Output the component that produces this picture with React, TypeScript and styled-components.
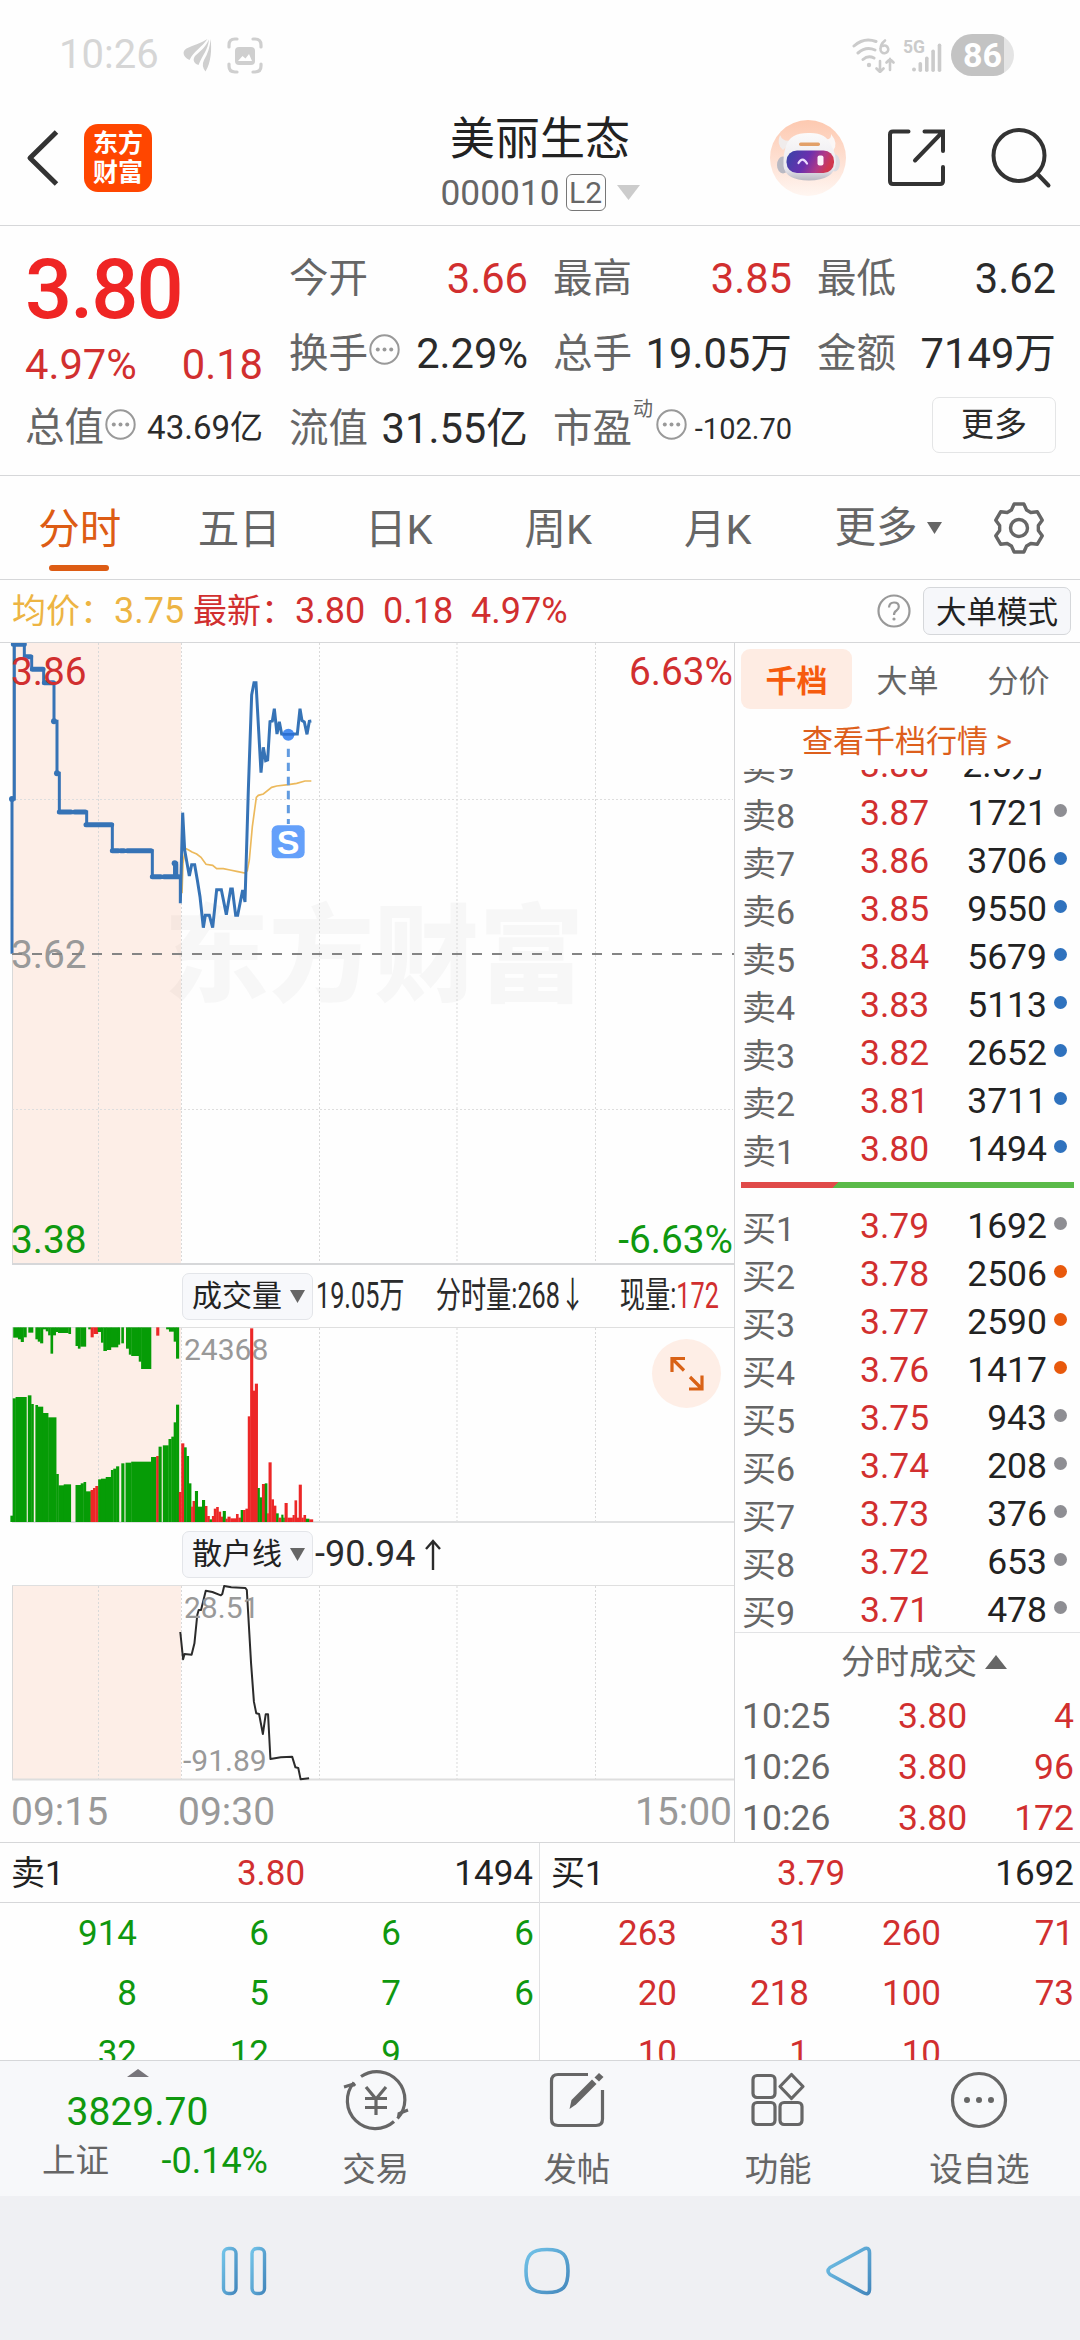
import React from "react";
import styled, { createGlobalStyle } from "styled-components";

const RED = "#d12f2f";
const GREEN = "#0f980f";
const GREY = "#666666";
const INK = "#2b2b2b";
const LINE = "#d6d7d9";

const Global = createGlobalStyle`
  * { box-sizing: border-box; }
  body {
    margin: 0;
    background: #fefefe;
    font-family: Roboto, "Noto Sans CJK SC", sans-serif;
    color: ${INK};
  }
`;

const Screen = styled.div`
  width: 1080px;
  height: 2340px;
  overflow: hidden;
  display: flex;
  flex-direction: column;
  background: #fefefe;
  white-space: nowrap;
`;

/* ---------- status bar ---------- */

const StatusBar = styled.div`
  height: 90px;
  padding: 20px 66px 0 59px;
  display: flex;
  align-items: center;
  justify-content: space-between;
  color: #d6d6d6;
`;

const StatusGroup = styled.div<{ $gap: number }>`
  display: flex;
  align-items: center;
  gap: ${(p) => p.$gap}px;
`;

const Clock = styled.span`
  font-size: 40px;
  line-height: 40px;
  width: 104px;
  margin-right: 5px;
`;

const Battery = styled.div`
  width: 63px;
  height: 42px;
  border-radius: 21px;
  background: linear-gradient(90deg, #c3c3c3 84%, #e4e4e4 84%);
  color: #fff;
  font-weight: 700;
  font-size: 34px;
  line-height: 43px;
  text-align: center;
`;

/* ---------- header ---------- */

const Header = styled.header`
  height: 136px;
  border-bottom: 1px solid ${LINE};
  display: grid;
  grid-template-columns: 310px 1fr 310px;
  align-items: center;
`;

const HeaderLeft = styled.div`
  display: flex;
  align-items: center;
  gap: 25px;
  padding-left: 26px;
`;

const Logo = styled.div`
  width: 68px;
  height: 68px;
  border-radius: 14px;
  background: #ff4600;
  color: #fff;
  font-weight: 700;
  font-size: 25px;
  line-height: 29px;
  display: flex;
  flex-direction: column;
  align-items: center;
  justify-content: center;
`;

const Titles = styled.div`
  display: flex;
  flex-direction: column;
  align-items: center;
  padding-top: 14px;
`;

const StockName = styled.div`
  font-size: 45px;
  line-height: 56px;
  color: #222;
`;

const CodeRow = styled.div`
  display: flex;
  align-items: center;
  gap: 6px;
  height: 50px;
  color: ${GREY};
  font-size: 35.3px;
  line-height: 40px;
`;

const LevelBadge = styled.span`
  width: 40px;
  height: 37px;
  border: 1.5px solid #777;
  border-radius: 6px;
  font-size: 30px;
  line-height: 35px;
  text-align: center;
  margin-right: 5px;
`;

const HeaderRight = styled.div`
  display: flex;
  align-items: center;
  justify-content: flex-end;
  padding-right: 28px;
`;

/* ---------- quote summary ---------- */

const Summary = styled.section`
  height: 250px;
  border-bottom: 1px solid ${LINE};
  padding: 0 24px 0 25px;
  display: grid;
  grid-template-columns: 238px 1fr;
  column-gap: 26px;
`;

const SummaryLeft = styled.div`
  padding-top: 21px;
  display: flex;
  flex-direction: column;
`;

const BigPrice = styled.div`
  height: 84px;
  line-height: 86px;
  font-size: 83px;
  font-weight: 500;
  letter-spacing: -2px;
  color: #ef2524;
`;

const ChangeRow = styled.div`
  height: 67px;
  line-height: 67px;
  font-size: 41.7px;
  color: ${RED};
  display: flex;
  justify-content: space-between;
`;

const MetricGrid = styled.div`
  padding-top: 15px;
  display: grid;
  grid-template-columns: 239px 239px 239px;
  grid-auto-rows: 75px;
  column-gap: 25px;
`;

const Metric = styled.div<{ $h?: number }>`
  height: ${(p) => p.$h ?? 75}px;
  display: flex;
  align-items: center;
  justify-content: space-between;
`;

const MetricLabel = styled.span`
  display: flex;
  align-items: center;
  font-size: 39.5px;
  line-height: 50px;
  color: ${GREY};
`;

const MetricValue = styled.span<{ $size?: number; $color?: string }>`
  font-size: ${(p) => p.$size ?? 41.7}px;
  line-height: 50px;
  color: ${(p) => p.$color ?? INK};
`;

const SupNote = styled.sup`
  font-size: 20px;
  line-height: 20px;
  align-self: flex-start;
  margin: -5px 2px 0 1px;
`;

const MoreButton = styled.button`
  width: 124px;
  height: 56px;
  padding: 0;
  margin-top: -7px;
  margin-left: auto;
  border: 1.5px solid #e4e5e6;
  border-radius: 7px;
  background: #fefefe;
  font: inherit;
  font-size: 33px;
  line-height: 52px;
  color: ${INK};
`;

/* ---------- period tabs ---------- */

const Tabs = styled.nav`
  height: 104px;
  border-bottom: 1px solid ${LINE};
  display: flex;
  align-items: center;
`;

const Tab = styled.div<{ $active?: boolean }>`
  position: relative;
  width: 159.5px;
  height: 103px;
  text-align: center;
  font-size: 41.5px;
  line-height: 107px;
  color: ${(p) => (p.$active ? "#dd5c14" : GREY)};
  &::after {
    content: "";
    display: ${(p) => (p.$active ? "block" : "none")};
    position: absolute;
    left: 49px;
    bottom: 8px;
    width: 60px;
    height: 6px;
    border-radius: 3px;
    background: #dd5c14;
  }
`;

const MoreTab = styled.div`
  display: flex;
  align-items: center;
  gap: 9px;
  width: 156px;
  height: 103px;
  padding-left: 37px;
  margin-right: 38px;
  font-size: 41.5px;
  line-height: 107px;
  color: ${GREY};
`;

/* ---------- legend bar ---------- */

const Legend = styled.div`
  height: 63px;
  border-bottom: 1px solid ${LINE};
  padding: 0 9px 0 12px;
  display: flex;
  align-items: center;
  font-size: 36px;
  line-height: 62px;
  color: ${RED};
`;

const LegendItem = styled.span<{ $w: number; $color?: string }>`
  width: ${(p) => p.$w}px;
  color: ${(p) => p.$color ?? RED};
`;

const LegendName = styled.span`
  font-size: 34px;
`;

const ModeButton = styled.div`
  width: 148px;
  height: 48px;
  margin-left: 12px;
  border: 1.5px solid #d5d7da;
  border-radius: 7px;
  background: #f6f7fa;
  color: #222;
  font-size: 30.5px;
  line-height: 49px;
  text-align: center;
`;

const Spacer = styled.div`
  flex: 1;
`;

/* ---------- main area ---------- */

const Main = styled.main`
  height: 1200px;
  border-bottom: 1px solid ${LINE};
  display: grid;
  grid-template-columns: 734px 1fr;
`;

const ChartColumn = styled.div`
  display: flex;
  flex-direction: column;
`;

const ChartBox = styled.div<{ $h: number }>`
  position: relative;
  height: ${(p) => p.$h}px;
  svg { display: block; }
`;

const AxisText = styled.span<{ $top: number; $left?: number; $right?: number; $color: string; $size?: number }>`
  position: absolute;
  top: ${(p) => p.$top}px;
  ${(p) => (p.$left !== undefined ? `left: ${p.$left}px;` : "")}
  ${(p) => (p.$right !== undefined ? `right: ${p.$right}px;` : "")}
  font-size: ${(p) => p.$size ?? 38.8}px;
  line-height: 40px;
  color: ${(p) => p.$color};
`;

const IndicatorRow = styled.div`
  height: 62px;
  padding-left: 182px;
  display: flex;
  align-items: center;
`;

const IndicatorPicker = styled.div`
  flex: none;
  width: 131px;
  height: 47px;
  border: 1px solid #e3e5e9;
  border-radius: 7px;
  background: #f7f8fb;
  padding-left: 9px;
  display: flex;
  align-items: center;
  gap: 8px;
  font-size: 30px;
  line-height: 46px;
  color: #222;
`;

const CondensedLine = styled.div`
  flex: none;
  margin-left: 3px;
  width: 590px;
  margin-right: -200px;
  display: flex;
  font-size: 36px;
  line-height: 44px;
  transform: scaleX(0.7);
  transform-origin: left center;
`;

const CondensedItem = styled.span<{ $w: number }>`
  flex: none;
  width: ${(p) => p.$w}px;
  em { font-style: normal; color: ${RED}; }
`;

const IndicatorValue = styled.span`
  display: flex;
  align-items: center;
  gap: 10px;
  margin-left: 2px;
  font-size: 36px;
`;

const ExpandButton = styled.div`
  position: absolute;
  left: 652px;
  top: 12px;
  width: 69px;
  height: 69px;
  border-radius: 50%;
  background: #feeee6;
`;

const TimeAxis = styled.div`
  flex: 1;
  padding: 0 2px 0 11px;
  display: flex;
  align-items: center;
  font-size: 39px;
  color: #999;
`;

const TimeMark = styled.span<{ $w?: number }>`
  ${(p) => (p.$w ? `width: ${p.$w}px;` : "margin-left: auto;")}
`;

/* ---------- order book ---------- */

const Book = styled.aside`
  border-left: 1px solid ${LINE};
  display: flex;
  flex-direction: column;
`;

const BookTabs = styled.div`
  display: flex;
  padding: 6px 0 0 6px;
`;

const BookTab = styled.div<{ $active?: boolean }>`
  width: 111px;
  height: 60px;
  border-radius: 9px;
  text-align: center;
  font-size: 31px;
  line-height: 65px;
  font-weight: ${(p) => (p.$active ? 700 : 400)};
  color: ${(p) => (p.$active ? "#f65b0d" : GREY)};
  background: ${(p) => (p.$active ? "#feece3" : "transparent")};
`;

const BookLink = styled.div`
  height: 60px;
  line-height: 66px;
  padding-left: 67px;
  font-size: 31px;
  color: #dd5f1c;
`;

const BookList = styled.div<{ $h: number; $end?: boolean }>`
  height: ${(p) => p.$h}px;
  overflow: hidden;
  display: flex;
  flex-direction: column;
  justify-content: ${(p) => (p.$end ? "flex-end" : "flex-start")};
`;

const BookRow = styled.div`
  flex: none;
  height: 48.04px;
  padding: 0 13px 0 7px;
  display: grid;
  grid-template-columns: 118px 80px 107px 1fr;
  align-items: center;
  font-size: 35.5px;
  line-height: 48px;
`;

const Side = styled.span`
  font-size: 34px;
  line-height: 42px;
  color: ${GREY};
  padding-top: 6px;
`;

const Price = styled.span`
  color: ${RED};
`;

const Volume = styled.span`
  text-align: right;
  color: #222;
`;

const Dot = styled.i<{ $color: string }>`
  width: 13px;
  height: 13px;
  margin: 0 0 5px auto;
  border-radius: 50%;
  background: ${(p) => p.$color};
`;

const RatioBar = styled.div`
  height: 6px;
  margin: 9px 6px 14px;
  background: linear-gradient(135deg, #e04a49 0 69px, #5aba49 69px);
`;

const TradesTitle = styled.div`
  height: 58px;
  border-top: 1px solid #e2e3e5;
  padding-left: 106px;
  display: flex;
  align-items: center;
  gap: 8px;
  font-size: 34px;
  line-height: 60px;
  color: ${GREY};
`;

const TradeRow = styled.div`
  height: 51px;
  padding: 0 6px 0 7px;
  display: grid;
  grid-template-columns: 156px 1fr 1fr;
  align-items: center;
  font-size: 35.5px;
  color: ${RED};
`;

const TradeTime = styled.span`
  color: ${GREY};
`;

const TradeVolume = styled.span`
  text-align: right;
`;

/* ---------- queue table ---------- */

const Queues = styled.section`
  height: 218px;
  border-bottom: 1px solid ${LINE};
  display: grid;
  grid-template-columns: 540px 540px;
`;

const Queue = styled.div<{ $divider?: boolean }>`
  overflow: hidden;
  border-right: ${(p) => (p.$divider ? "1px solid #e0e1e3" : "none")};
`;

const QueueHead = styled.div`
  height: 60px;
  border-bottom: 1px solid ${LINE};
  padding: 0 6px 0 11px;
  display: grid;
  grid-template-columns: 220px 80px 1fr;
  font-size: 35px;
  line-height: 61px;
  color: #222;
  span:nth-child(1) { font-size: 34px; }
  span:nth-child(2) { color: ${RED}; text-align: center; }
  span:nth-child(3) { text-align: right; }
`;

const QueueGrid = styled.div<{ $color: string }>`
  display: grid;
  grid-template-columns: 137px 132px 132px 133px;
  grid-auto-rows: 60px;
  text-align: right;
  font-size: 35px;
  line-height: 61px;
  color: ${(p) => p.$color};
`;

/* ---------- bottom toolbar ---------- */

const Toolbar = styled.footer`
  height: 135px;
  background: #f7f8fa;
  display: grid;
  grid-template-columns: 275px repeat(4, 201.25px);
`;

const IndexBox = styled.div`
  display: flex;
  flex-direction: column;
  align-items: center;
  padding-top: 8px;
  color: ${GREEN};
  svg { display: block; }
`;

const IndexValue = styled.div`
  margin-top: 12px;
  font-size: 39px;
  line-height: 46px;
`;

const IndexRow = styled.div`
  width: 100%;
  padding: 0 7px 0 42px;
  display: flex;
  justify-content: space-between;
  font-size: 36px;
  line-height: 44px;
  margin-top: 4px;
`;

const IndexName = styled.span`
  font-size: 33.5px;
  color: ${GREY};
`;

const Action = styled.div`
  display: flex;
  flex-direction: column;
  align-items: center;
  padding-top: 6px;
  font-size: 33.5px;
  color: ${GREY};
  svg { display: block; }
`;

const ActionLabel = styled.span`
  margin-top: 15px;
  line-height: 44px;
`;

const NavBar = styled.div`
  height: 144px;
  background: #eff0f3;
  display: flex;
  align-items: center;
  justify-content: space-between;
  padding: 6px 205px 0 219px;
`;

/* ---------- icons ---------- */

const Triangle = ({ w, h, color, up }: { w: number; h: number; color: string; up?: boolean }) => (
  <svg width={w} height={h} viewBox="0 0 10 10" preserveAspectRatio="none">
    <path d={up ? "M0 10L5 0L10 10Z" : "M0 0H10L5 10Z"} fill={color} />
  </svg>
);

const InfoSvg = styled.svg`
  margin-top: -8px;
`;

const InfoIcon = () => (
  <InfoSvg width="33" height="33" viewBox="0 0 33 33">
    <circle cx="16.5" cy="16.5" r="14.2" fill="none" stroke="#999" strokeWidth="2" />
    <circle cx="9.8" cy="16.5" r="2" fill="#999" />
    <circle cx="16.5" cy="16.5" r="2" fill="#999" />
    <circle cx="23.2" cy="16.5" r="2" fill="#999" />
  </InfoSvg>
);

const Plane = () => (
  <svg width="29" height="34" viewBox="0 0 29 34" fill="#cfcfcf">
    <path d="M27.500 1C29 11 28 25 22.500 33.500C19.500 30 19 26 21 22C25 15 27 9 27.500 1Z" />
    <path d="M26 1.500C25 12 19.500 17 15.500 27C10 25 9.500 21 12.500 17.500C19 12 23 8 26 1.500Z" />
    <path d="M24.500 1C19 9 11 13 6.500 22C-0.500 19 -1 13 3.500 10.500C11 7 18 5 24.500 1Z" />
  </svg>
);

const ShotIcon = () => (
  <svg width="36" height="37" viewBox="0 0 36 37" fill="none" stroke="#cfcfcf" strokeWidth="3.2" strokeLinecap="round">
    <path d="M2 10V8Q2 2 8 2H10M26 2H28Q34 2 34 8V10M34 27V29Q34 35 28 35H26M10 35H8Q2 35 2 29V27" />
    <rect x="8" y="10" width="20" height="18" rx="4" fill="#cfcfcf" stroke="none" />
    <path d="M11 24L15.500 19L18.500 21.500L22 17L25 24Z" fill="#fff" stroke="none" />
  </svg>
);

const WifiIcon = () => (
  <svg width="43" height="36" viewBox="0 0 43 36" fill="none" stroke="#cbcbcb" strokeWidth="3" strokeLinecap="round">
    <path d="M2 9Q12 0 24 4.500M6 16Q14 9 23 13M11 22.500Q16 18 22 21" />
    <circle cx="17" cy="28" r="2.200" fill="#cbcbcb" stroke="none" />
    <path d="M33 3.500Q28.500 7 28.500 12A3.900 3.900 0 1 0 30.500 9" strokeWidth="2.600" />
    <path d="M28 24V35M24.500 31.500L28 35L31.500 31.500M38 33V22M34.500 25.500L38 22L41.500 25.500" strokeWidth="2.600" />
  </svg>
);

const SignalIcon = () => (
  <svg width="40" height="36" viewBox="0 0 40 36" fill="#cbcbcb">
    <text x="0" y="15.500" fontSize="18" fontWeight="700" fontFamily="Roboto, sans-serif" textLength="22" lengthAdjust="spacingAndGlyphs">5G</text>
    <circle cx="11" cy="32.500" r="2" />
    <rect x="15.500" y="25" width="3.600" height="10" rx="1.800" />
    <rect x="22" y="19.500" width="3.600" height="15.500" rx="1.800" />
    <rect x="28.300" y="12.500" width="3.600" height="22.500" rx="1.800" />
    <rect x="34.700" y="6.500" width="3.600" height="28.500" rx="1.800" />
  </svg>
);

const BackIcon = () => (
  <svg width="33" height="56" viewBox="0 0 33 56" fill="none" stroke="#333" strokeWidth="5">
    <path d="M30.500 2L4 28L30.500 54" strokeLinejoin="round" />
  </svg>
);

const RobotSvg = styled.svg`
  margin-right: 40px;
`;

const Robot = () => (
  <RobotSvg width="76" height="76" viewBox="0 0 76 76">
    <defs>
      <linearGradient id="halo" x1="0" y1="0" x2="0" y2="1">
        <stop offset="0" stopColor="#fdc9b0" />
        <stop offset="0.550" stopColor="#fee1d4" />
        <stop offset="1" stopColor="#fff6f1" />
      </linearGradient>
      <linearGradient id="visor" x1="0" y1="0" x2="1" y2="0.250">
        <stop offset="0" stopColor="#3546a8" />
        <stop offset="0.500" stopColor="#6b2fae" />
        <stop offset="0.800" stopColor="#b23a86" />
        <stop offset="1" stopColor="#d0384f" />
      </linearGradient>
      <linearGradient id="shell" x1="0" y1="0" x2="0" y2="1">
        <stop offset="0" stopColor="#fbfafa" />
        <stop offset="0.750" stopColor="#e9e8ee" />
        <stop offset="1" stopColor="#b9b8c2" />
      </linearGradient>
    </defs>
    <circle cx="38" cy="38" r="38" fill="url(#halo)" />
    <ellipse cx="13" cy="45" rx="6" ry="8.500" fill="#b9b9c3" />
    <ellipse cx="65" cy="43" rx="5" ry="8.500" fill="#dcdce2" />
    <path d="M10 15Q6 24 13 30L23 20Q13 23 10 15Z" fill="#f0ecec" />
    <path d="M61 14Q69 24 63 31L53 19Q62 21 61 14Z" fill="#fbf7f6" />
    <path d="M16 26Q20 13 38 13Q56 12 61 25Q66 33 66 44Q64 60 39 60.500Q15 60 13.500 46Q13 34 16 26Z" fill="url(#shell)" />
    <rect x="29" y="22.500" width="21" height="3.500" rx="1.700" fill="#e2a069" />
    <rect x="16.500" y="30.500" width="47.500" height="22.500" rx="10.500" fill="url(#visor)" />
    <path d="M28.500 43Q32.500 36 37 43.500" fill="none" stroke="#ecdcff" strokeWidth="2.200" strokeLinecap="round" />
    <rect x="47.500" y="35.500" width="6" height="10" rx="2" fill="#fdf4fb" />
  </RobotSvg>
);

const ShareSvg = styled.svg`
  margin-right: 44px;
`;

const ShareIcon = () => (
  <ShareSvg width="60" height="60" viewBox="0 0 60 60" fill="none" stroke="#333" strokeWidth="4" strokeLinecap="round">
    <path d="M22.500 3.500H7Q4 3.500 4 6.500V53Q4 56 7 56H54Q57 56 57 53V39" />
    <path d="M38.500 3.500H57V23M57 3.500L29 32.500" />
  </ShareSvg>
);

const SearchIcon = () => (
  <svg width="62" height="62" viewBox="0 0 62 62" fill="none" stroke="#333" strokeWidth="4" strokeLinecap="round">
    <circle cx="29" cy="28.500" r="25.500" />
    <path d="M47.500 47L58.500 58.500" />
  </svg>
);

const gearPath = (() => {
  const pts: string[] = [];
  const n = 6;
  for (let i = 0; i < n; i++) {
    const a = (i * 2 * Math.PI) / n - Math.PI / 2;
    const at = (r: number, d: number) =>
      `${(27 + r * Math.cos(a + d)).toFixed(2)} ${(27 + r * Math.sin(a + d)).toFixed(2)}`;
    pts.push(at(19.5, -0.4), at(24.5, -0.2), at(24.5, 0.2), at(19.5, 0.4));
  }
  return "M" + pts.join("L") + "Z";
})();

const GearIcon = () => (
  <svg width="54" height="54" viewBox="0 0 54 54" fill="none" stroke={GREY} strokeWidth="3.400" strokeLinejoin="round">
    <path d={gearPath} />
    <circle cx="27" cy="27" r="8.500" />
  </svg>
);

const HelpIcon = () => (
  <svg width="34" height="34" viewBox="0 0 34 34" fill="none" stroke="#999" strokeWidth="2.200">
    <circle cx="17" cy="17" r="15.500" />
    <path d="M12 13.500Q12.300 8.500 17 8.500Q21.800 8.500 21.800 12.700Q21.800 15 19.500 16.500Q17 18 17 21" />
    <circle cx="17" cy="25" r="1.600" fill="#999" stroke="none" />
  </svg>
);

const ExpandIcon = () => (
  <svg width="69" height="69" viewBox="0 0 69 69" fill="none" stroke="#d96216" strokeWidth="3.200">
    <path d="M20 33V19.500H33M20 19.500L32 31.500M50 36.500V50H37M50 50L38 38" />
  </svg>
);

const TradeIcon = () => (
  <svg width="66" height="66" viewBox="0 0 66 66" fill="none" stroke={GREY} strokeWidth="3.200">
    <path d="M18 9.500A28 28 0 0 1 54.500 51.500" />
    <path d="M51 54.500A28 28 0 0 1 11 15.500" />
    <path d="M1 20L10.500 17L12 19M65 43L56 46.500L55.500 50" strokeWidth="3" />
    <path d="M23 20L33 32L43 20M33 32V48M22 31.500H44M22 40.500H44" />
  </svg>
);

const PostIcon = () => (
  <svg width="60" height="66" viewBox="0 0 60 66" fill="none" stroke={GREY} strokeWidth="3.200">
    <path d="M41 7.500H11Q4.500 7.500 4.500 14V52Q4.500 58.500 11 58.500H49Q55.500 58.500 55.500 52V23" />
    <path d="M22.500 42L24.500 33L45 12.500L49.500 17L29 37.500Z" fill={GREY} stroke="none" />
    <path d="M47.500 10.500L52 6L56.500 10L52 14.500Z" fill={GREY} stroke="none" />
  </svg>
);

const AppsIcon = () => (
  <svg width="60" height="66" viewBox="0 0 60 66" fill="none" stroke={GREY} strokeWidth="3.200">
    <rect x="5" y="8.500" width="22" height="22" rx="4" />
    <rect x="5" y="35.500" width="22" height="22" rx="4" />
    <rect x="32" y="35.500" width="22" height="22" rx="4" />
    <path d="M43.500 7.500L55 19.500L43.500 31.500L32 19.500Z" strokeLinejoin="round" />
  </svg>
);

const DotsIcon = () => (
  <svg width="60" height="66" viewBox="0 0 60 66" fill="none" stroke={GREY} strokeWidth="3.200">
    <circle cx="30" cy="33" r="26.500" />
    <g fill={GREY} stroke="none">
      <circle cx="18" cy="33" r="3" />
      <circle cx="30" cy="33" r="3" />
      <circle cx="42" cy="33" r="3" />
    </g>
  </svg>
);

const NavGradient = ({ id }: { id: string }) => (
  <linearGradient id={id} x1="0" y1="0" x2="1" y2="1">
    <stop offset="0" stopColor="#72c3e8" />
    <stop offset="1" stopColor="#4488bd" />
  </linearGradient>
);

const RecentsIcon = () => (
  <svg width="50" height="52" viewBox="0 0 50 52" fill="none" stroke="url(#navA)" strokeWidth="3.400">
    <defs>
      <NavGradient id="navA" />
    </defs>
    <rect x="4.500" y="3.500" width="12.500" height="45" rx="5" />
    <rect x="33" y="3.500" width="12.500" height="45" rx="5" />
  </svg>
);

const HomeIcon = () => (
  <svg width="50" height="52" viewBox="0 0 50 52" fill="none" stroke="url(#navB)" strokeWidth="3.600">
    <defs>
      <NavGradient id="navB" />
    </defs>
    <path d="M25 4.500C41 4.500 46 10 46 26C46 42 41 47.500 25 47.500C9 47.500 4 42 4 26C4 10 9 4.500 25 4.500Z" />
  </svg>
);

const BackNavIcon = () => (
  <svg width="50" height="52" viewBox="0 0 50 52" fill="none" stroke="url(#navC)" strokeWidth="3.600" strokeLinejoin="round">
    <defs>
      <NavGradient id="navC" />
    </defs>
    <path d="M38 4.500Q44.500 1 44.500 8V44Q44.500 51 38 47.500L5 29.500Q1 26 5 22.500Z" />
  </svg>
);

/* ---------- charts ---------- */

const GRID_X = [98.5, 181.5, 319.5, 457, 595.5];

const GridLines = ({ y1, y2 }: { y1: number; y2: number }) => (
  <g stroke="#d9d9d9" strokeWidth="1" strokeDasharray="2 2">
    {GRID_X.map((x) => (
      <path key={x} d={`M${x} ${y1}V${y2}`} />
    ))}
  </g>
);

const OverlaySvg = styled.svg<{ $top: number }>`
  position: absolute;
  left: 0;
  top: ${(p) => p.$top}px;
`;

const pricePath =
  "M36 971V507H43V43H73V80H95V118H131V158H162V274H171V430H178V546H260V584H337V662H457V740H524V700H530V740H541V820L548 548L554 660L568 738L575 704H584L592 750L600 800L610 893L616 856H628L638 893L650 779H664L679 854L692 777H697L707 856H713L728 780L735 816L745 480L755 195L762 158H768L783 428L790 352L797 392L803 390L810 275L817 273L823 236L831 312L838 275L845 312H892L900 236L906 272L913 276L921 313L928 274L934 273";
const averagePath =
  "M546 790L549 700L556 655L566 660L576 666L590 672L603 682L618 703L638 706L650 716L670 716L690 720L710 724L735 729L742 722L748 690L757 590L769 502L775 496L790 492L815 472L830 468L865 464L890 460L915 453L934 453";
const stepsPath =
  "M40 43H73M76 80H92M97 118H129M133 158H160M178 546H213M224 546H256M258 584H335M337 662H355M362 662H372M382 662H453M457 740H482M492 740H537M527 703V738";

const PriceChart = () => (
  <ChartBox $h={622}>
    <svg width="734" height="622" viewBox="0 643 734 622">
      <rect x="12" y="643" width="169" height="621" fill="#fdeee7" />
      <text
        x="164"
        y="993"
        fontSize="106"
        fontWeight="900"
        fontFamily="Noto Sans CJK SC, sans-serif"
        fill="#000"
        fillOpacity="0.028"
        textLength="420"
        lengthAdjust="spacingAndGlyphs"
      >
        东方财富
      </text>
      <path d="M12.500 643V1264" stroke="#d9d9d9" />
      <GridLines y1={643} y2={1264} />
      <path d="M12 799.500H733M12 1109.500H733" stroke="#dedede" strokeDasharray="2 2" />
      <path d="M12 1264H734" stroke={LINE} strokeWidth="2" />
      <g transform="translate(0 630) scale(0.33333)" fill="none">
        <path d={averagePath} stroke="#ecb95c" strokeWidth="5" />
        <path d={pricePath} stroke="#3673b6" strokeWidth="9" />
        <path d={stepsPath} stroke="#3673b6" strokeWidth="15" strokeLinecap="round" />
        <g fill="#3673b6">
          <circle cx="36" cy="507" r="9" />
          <circle cx="162" cy="274" r="9" />
          <circle cx="171" cy="430" r="9" />
          <circle cx="524" cy="700" r="9" />
        </g>
        <path d="M865 356V582" stroke="#619be0" strokeWidth="9" strokeDasharray="25 17.200" />
        <circle cx="865" cy="314" r="18" fill="#4a8ef0" />
        <path d="M847 313H883" stroke="#2c6fd0" strokeWidth="8" />
        <rect x="815" y="586" width="99" height="99" rx="18" fill="#64a0fa" />
        <text x="864.500" y="672" fontSize="102" fontWeight="700" fontFamily="Liberation Sans, sans-serif" fill="#fff" textAnchor="middle">
          S
        </text>
      </g>
    </svg>
    <AxisText $top={9} $left={11} $color={RED}>3.86</AxisText>
    <AxisText $top={9} $right={1} $color={RED}>6.63%</AxisText>
    <AxisText $top={292} $left={11} $color="#999">3.62</AxisText>
    <AxisText $top={577} $left={11} $color={GREEN}>3.38</AxisText>
    <AxisText $top={577} $right={1} $color={GREEN}>-6.63%</AxisText>
    <OverlaySvg $top={309} width="734" height="4" viewBox="0 0 734 4">
      <path d="M12 2H734" stroke="#858585" strokeWidth="2" strokeDasharray="10 10" />
    </OverlaySvg>
  </ChartBox>
);

type Bar = [number, number, number, string];

/* x range, depth reached from the top edge, colour */
const upperBars: Bar[] = [
  [28, 38, 263, "g"], [38, 44, 268, "g"], [44, 50, 276, "g"], [50, 56, 262, "g"], [60, 70, 248, "g"],
  [75, 80, 268, "g"], [80, 85, 275, "g"], [85, 91, 280, "g"], [91, 97, 238, "g"], [97, 102, 244, "g"],
  [102, 107, 256, "g"], [107, 112, 311, "g"], [112, 118, 256, "g"], [118, 123, 246, "g"], [123, 145, 249, "g"],
  [145, 150, 252, "g"], [160, 165, 288, "g"], [165, 170, 296, "g"], [170, 182, 290, "g"], [187, 192, 238, "g"],
  [192, 198, 262, "r"], [198, 207, 252, "r"], [207, 214, 246, "g"], [214, 219, 278, "g"], [219, 226, 303, "g"],
  [226, 235, 300, "g"], [235, 250, 292, "g"], [250, 254, 284, "g"], [257, 262, 280, "g"], [267, 273, 296, "g"],
  [273, 278, 314, "g"], [278, 294, 318, "g"], [294, 299, 335, "g"], [299, 320, 357, "g"], [331, 337, 257, "r"],
  [352, 358, 238, "g"], [358, 368, 245, "g"], [368, 373, 275, "g"], [373, 379, 326, "g"],
];

/* x range, top of the bar, colour */
const lowerBars: Bar[] = [
  [22, 27, 797, "g"], [27, 33, 445, "g"], [33, 56, 441, "g"], [59, 66, 436, "g"], [66, 71, 462, "g"],
  [75, 80, 465, "g"], [80, 91, 470, "g"], [91, 102, 489, "g"], [102, 119, 502, "g"], [119, 124, 672, "g"],
  [124, 135, 706, "g"], [135, 150, 703, "g"], [160, 171, 705, "g"], [171, 177, 700, "g"], [177, 182, 696, "g"],
  [182, 192, 724, "g"], [192, 197, 720, "r"], [197, 202, 714, "r"], [202, 208, 708, "r"], [208, 214, 688, "g"],
  [214, 224, 686, "g"], [224, 235, 681, "g"], [235, 240, 660, "g"], [240, 246, 656, "g"], [246, 252, 649, "g"],
  [257, 263, 640, "g"], [266, 278, 638, "g"], [278, 320, 635, "g"], [320, 331, 621, "g"], [331, 336, 618, "r"],
  [336, 342, 590, "g"], [345, 357, 586, "g"], [357, 363, 567, "g"], [363, 368, 560, "g"], [368, 373, 517, "g"],
  [373, 379, 464, "g"], [379, 384, 726, "r"], [384, 390, 580, "r"], [390, 395, 592, "g"], [395, 400, 618, "g"],
  [400, 405, 700, "g"], [405, 408, 770, "r"], [408, 413, 753, "r"], [413, 419, 723, "g"], [419, 428, 770, "g"],
  [428, 434, 750, "g"], [434, 439, 768, "r"], [439, 444, 798, "r"], [444, 449, 808, "g"], [449, 453, 798, "r"],
  [453, 458, 776, "r"], [458, 463, 771, "r"], [463, 468, 785, "r"], [468, 472, 800, "r"], [472, 478, 783, "g"],
  [478, 482, 806, "r"], [482, 488, 800, "r"], [488, 500, 805, "r"], [500, 505, 792, "r"], [505, 510, 803, "r"],
  [510, 515, 780, "g"], [515, 520, 780, "r"], [520, 525, 776, "r"], [525, 530, 499, "r"], [530, 536, 235, "r"],
  [536, 540, 422, "r"], [540, 546, 401, "r"], [546, 550, 714, "g"], [550, 555, 742, "g"], [555, 561, 702, "r"],
  [561, 566, 700, "g"], [566, 569, 790, "r"], [569, 575, 637, "r"], [575, 580, 748, "r"], [580, 585, 767, "r"],
  [585, 590, 790, "g"], [590, 596, 803, "r"], [596, 600, 794, "g"], [600, 603, 803, "g"], [603, 609, 759, "r"],
  [609, 620, 803, "r"], [620, 624, 795, "r"], [624, 629, 751, "r"], [629, 633, 803, "r"], [633, 639, 704, "r"],
  [639, 643, 803, "r"], [643, 648, 795, "r"], [648, 655, 806, "g"], [655, 663, 808, "r"],
];

const barColor = (c: string) => (c === "g" ? "#069c06" : "#ec2727");

const VolumeChart = () => (
  <ChartBox $h={196}>
    <svg width="734" height="196" viewBox="0 1327 734 196">
      <rect x="12" y="1327" width="169" height="194" fill="#fdeee7" />
      <path d="M12.500 1327V1521" stroke="#d9d9d9" />
      <GridLines y1={1328} y2={1521} />
      <path d="M12 1327.500H734" stroke="#dfdfdf" />
      <path d="M12 1522H734" stroke={LINE} strokeWidth="1.500" />
    </svg>
    <AxisText $top={3} $left={184} $color="#999" $size={30}>24368</AxisText>
    <OverlaySvg $top={0} width="734" height="196" viewBox="0 1327 734 196">
      <g transform="translate(0 1250) scale(0.47194 0.33333)" shapeRendering="geometricPrecision">
        {upperBars.map(([a, b, y, c]) => (
          <rect key={a} x={a} y={232} width={b - a + 0.6} height={y - 232} fill={barColor(c)} />
        ))}
        {lowerBars.map(([a, b, y, c]) => (
          <rect key={a} x={a} y={y} width={b - a + 0.6} height={816 - y} fill={barColor(c)} />
        ))}
      </g>
    </OverlaySvg>
    <ExpandButton>
      <ExpandIcon />
    </ExpandButton>
  </ChartBox>
);

const retailPath =
  "M382 306L388 388L391 372L406 374L412 340L418 255L421 240H426L436 182L450 186L468 196L471 192L475 168L490 172L520 174L523 180L532 400L538 515L543 550L549 552L557 612L563 553H568L573 687L595 682L619 680L626 712L632 714L637 748L655 745";

const RetailChart = () => (
  <ChartBox $h={196}>
    <svg width="734" height="196" viewBox="0 1585 734 196">
      <rect x="12" y="1585" width="169" height="194" fill="#fdeee7" />
      <path d="M12.500 1585V1780" stroke="#d9d9d9" />
      <GridLines y1={1586} y2={1779} />
      <path d="M12 1585.500H734" stroke="#dfdfdf" />
      <path d="M12 1779.500H734" stroke="#dedede" strokeWidth="2" />
      <g transform="translate(0 1530) scale(0.47194 0.33333)">
        <path d={retailPath} fill="none" stroke="#2b2b2b" strokeWidth="2" vectorEffect="non-scaling-stroke" strokeLinejoin="round" />
      </g>
    </svg>
    <AxisText $top={3} $left={184} $color="#999" $size={30}>28.51</AxisText>
    <AxisText $top={156} $left={183} $color="#999" $size={30}>-91.89</AxisText>
  </ChartBox>
);

/* ---------- data ---------- */

const G = "#8e8e93";
const B = "#2f72be";
const O = "#e8590c";

const sells: [string, string, string, string][] = [
  ["卖9", "3.88", "2.6万", ""],
  ["卖8", "3.87", "1721", G],
  ["卖7", "3.86", "3706", B],
  ["卖6", "3.85", "9550", B],
  ["卖5", "3.84", "5679", B],
  ["卖4", "3.83", "5113", B],
  ["卖3", "3.82", "2652", B],
  ["卖2", "3.81", "3711", B],
  ["卖1", "3.80", "1494", B],
];

const buys: [string, string, string, string][] = [
  ["买1", "3.79", "1692", G],
  ["买2", "3.78", "2506", O],
  ["买3", "3.77", "2590", O],
  ["买4", "3.76", "1417", O],
  ["买5", "3.75", "943", G],
  ["买6", "3.74", "208", G],
  ["买7", "3.73", "376", G],
  ["买8", "3.72", "653", G],
  ["买9", "3.71", "478", G],
];

const trades = [
  ["10:25", "3.80", "4"],
  ["10:26", "3.80", "96"],
  ["10:26", "3.80", "172"],
];

const sellQueue = ["914", "6", "6", "6", "8", "5", "7", "6", "32", "12", "9", ""];
const buyQueue = ["263", "31", "260", "71", "20", "218", "100", "73", "10", "1", "10", ""];

const Level = ({ row }: { row: [string, string, string, string] }) => (
  <BookRow>
    <Side>{row[0]}</Side>
    <Price>{row[1]}</Price>
    <Volume>{row[2]}</Volume>
    <Dot $color={row[3] || "transparent"} />
  </BookRow>
);

export default function App() {
  return (
    <Screen>
      <Global />
      <StatusBar>
        <StatusGroup $gap={15}>
          <Clock>10:26</Clock>
          <Plane />
          <ShotIcon />
        </StatusGroup>
        <StatusGroup $gap={8}>
          <WifiIcon />
          <SignalIcon />
          <Battery>86</Battery>
        </StatusGroup>
      </StatusBar>

      <Header>
        <HeaderLeft>
          <BackIcon />
          <Logo>
            <span>东方</span>
            <span>财富</span>
          </Logo>
        </HeaderLeft>
        <Titles>
          <StockName>美丽生态</StockName>
          <CodeRow>
            000010
            <LevelBadge>L2</LevelBadge>
            <Triangle w={23} h={15} color="#ccc" />
          </CodeRow>
        </Titles>
        <HeaderRight>
          <Robot />
          <ShareIcon />
          <SearchIcon />
        </HeaderRight>
      </Header>

      <Summary>
        <SummaryLeft>
          <BigPrice>3.80</BigPrice>
          <ChangeRow>
            <span>4.97%</span>
            <span>0.18</span>
          </ChangeRow>
          <Metric $h={60}>
            <MetricLabel>总值<InfoIcon /></MetricLabel>
            <MetricValue $size={33}>43.69亿</MetricValue>
          </Metric>
        </SummaryLeft>
        <MetricGrid>
          <Metric>
            <MetricLabel>今开</MetricLabel>
            <MetricValue $color={RED}>3.66</MetricValue>
          </Metric>
          <Metric>
            <MetricLabel>最高</MetricLabel>
            <MetricValue $color={RED}>3.85</MetricValue>
          </Metric>
          <Metric>
            <MetricLabel>最低</MetricLabel>
            <MetricValue>3.62</MetricValue>
          </Metric>
          <Metric>
            <MetricLabel>换手<InfoIcon /></MetricLabel>
            <MetricValue>2.29%</MetricValue>
          </Metric>
          <Metric>
            <MetricLabel>总手</MetricLabel>
            <MetricValue>19.05万</MetricValue>
          </Metric>
          <Metric>
            <MetricLabel>金额</MetricLabel>
            <MetricValue>7149万</MetricValue>
          </Metric>
          <Metric>
            <MetricLabel>流值</MetricLabel>
            <MetricValue>31.55亿</MetricValue>
          </Metric>
          <Metric>
            <MetricLabel>
              市盈<SupNote>动</SupNote>
              <InfoIcon />
            </MetricLabel>
            <MetricValue $size={29}>-102.70</MetricValue>
          </Metric>
          <Metric>
            <MoreButton>更多</MoreButton>
          </Metric>
        </MetricGrid>
      </Summary>

      <Tabs>
        <Tab $active>分时</Tab>
        <Tab>五日</Tab>
        <Tab>日K</Tab>
        <Tab>周K</Tab>
        <Tab>月K</Tab>
        <MoreTab>
          更多
          <Triangle w={15} h={12} color={GREY} />
        </MoreTab>
        <GearIcon />
      </Tabs>

      <Legend>
        <LegendItem $w={181} $color="#edb443">
          <LegendName>均价：</LegendName>3.75
        </LegendItem>
        <LegendItem $w={190}>
          <LegendName>最新：</LegendName>3.80
        </LegendItem>
        <LegendItem $w={88}>0.18</LegendItem>
        <LegendItem $w={100}>4.97%</LegendItem>
        <Spacer />
        <HelpIcon />
        <ModeButton>大单模式</ModeButton>
      </Legend>

      <Main>
        <ChartColumn>
          <PriceChart />
          <IndicatorRow>
            <IndicatorPicker>
              成交量
              <Triangle w={15} h={13} color={GREY} />
            </IndicatorPicker>
            <CondensedLine>
              <CondensedItem $w={171}>19.05万</CondensedItem>
              <CondensedItem $w={263}>分时量:268↓</CondensedItem>
              <CondensedItem $w={150}>
                现量:<em>172</em>
              </CondensedItem>
            </CondensedLine>
          </IndicatorRow>
          <VolumeChart />
          <IndicatorRow>
            <IndicatorPicker>
              散户线
              <Triangle w={15} h={13} color={GREY} />
            </IndicatorPicker>
            <IndicatorValue>
              -90.94
              <svg width="16" height="34" viewBox="0 0 16 34" fill="none" stroke={INK} strokeWidth="2.400">
                <path d="M8 33V4M1 12L8 4L15 12" />
              </svg>
            </IndicatorValue>
          </IndicatorRow>
          <RetailChart />
          <TimeAxis>
            <TimeMark $w={167}>09:15</TimeMark>
            <TimeMark $w={100}>09:30</TimeMark>
            <TimeMark>15:00</TimeMark>
          </TimeAxis>
        </ChartColumn>

        <Book>
          <BookTabs>
            <BookTab $active>千档</BookTab>
            <BookTab>大单</BookTab>
            <BookTab>分价</BookTab>
          </BookTabs>
          <BookLink>查看千档行情 &gt;</BookLink>
          <BookList $h={404} $end>
            {sells.map((r) => (
              <Level key={r[0]} row={r} />
            ))}
          </BookList>
          <RatioBar />
          <BookList $h={430}>
            {buys.map((r) => (
              <Level key={r[0]} row={r} />
            ))}
          </BookList>
          <TradesTitle>
            分时成交
            <Triangle w={22} h={14} color={GREY} up />
          </TradesTitle>
          {trades.map((t, i) => (
            <TradeRow key={i}>
              <TradeTime>{t[0]}</TradeTime>
              <span>{t[1]}</span>
              <TradeVolume>{t[2]}</TradeVolume>
            </TradeRow>
          ))}
        </Book>
      </Main>

      <Queues>
        <Queue $divider>
          <QueueHead>
            <span>卖1</span>
            <span>3.80</span>
            <span>1494</span>
          </QueueHead>
          <QueueGrid $color={GREEN}>
            {sellQueue.map((v, i) => (
              <span key={i}>{v}</span>
            ))}
          </QueueGrid>
        </Queue>
        <Queue>
          <QueueHead>
            <span>买1</span>
            <span>3.79</span>
            <span>1692</span>
          </QueueHead>
          <QueueGrid $color={RED}>
            {buyQueue.map((v, i) => (
              <span key={i}>{v}</span>
            ))}
          </QueueGrid>
        </Queue>
      </Queues>

      <Toolbar>
        <IndexBox>
          <Triangle w={22} h={8} color="#77757a" up />
          <IndexValue>3829.70</IndexValue>
          <IndexRow>
            <IndexName>上证</IndexName>
            <span>-0.14%</span>
          </IndexRow>
        </IndexBox>
        <Action>
          <TradeIcon />
          <ActionLabel>交易</ActionLabel>
        </Action>
        <Action>
          <PostIcon />
          <ActionLabel>发帖</ActionLabel>
        </Action>
        <Action>
          <AppsIcon />
          <ActionLabel>功能</ActionLabel>
        </Action>
        <Action>
          <DotsIcon />
          <ActionLabel>设自选</ActionLabel>
        </Action>
      </Toolbar>

      <NavBar>
        <RecentsIcon />
        <HomeIcon />
        <BackNavIcon />
      </NavBar>
    </Screen>
  );
}
